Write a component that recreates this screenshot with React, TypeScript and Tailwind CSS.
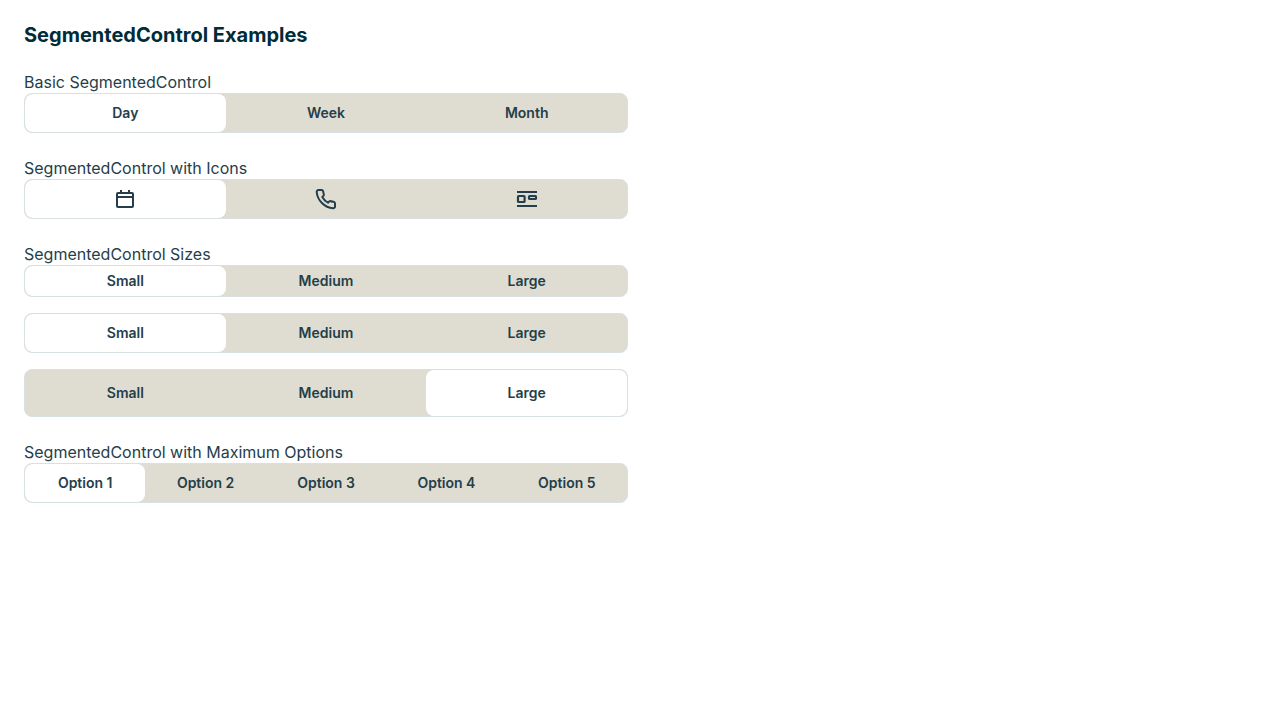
import { useId, useState } from "react";
import type { ReactNode } from "react";
import clsx from "clsx";

type Size = "small" | "medium" | "large";
type Option = { label: string; icon?: ReactNode };

const heights: Record<Size, string> = {
  small: "h-8",
  medium: "h-10",
  large: "h-12",
};

function CalendarIcon() {
  return (
    <svg className="size-6" viewBox="0 0 24 24" fill="none" stroke="currentColor" strokeWidth="2" aria-hidden="true">
      <rect x="4" y="6" width="16" height="14" rx="1" />
      <path d="M4 10h16M8 3v3M16 3v3" />
    </svg>
  );
}

function PhoneIcon() {
  return (
    <svg className="size-6" viewBox="0 0 24 24" fill="none" stroke="currentColor" strokeWidth="2" strokeLinejoin="round" aria-hidden="true">
      <path d="M21 16.9v2.6a1.8 1.8 0 0 1-2 1.8C10.7 20.7 3.3 13.3 2.7 5a1.8 1.8 0 0 1 1.8-2h2.9a1.8 1.8 0 0 1 1.8 1.5c.1.9.3 1.7.6 2.500a1.8 1.8 0 0 1-.4 1.900l-1.100 1.100a14 14 0 0 0 5.700 5.700l1.100-1.100a1.800 1.800 0 0 1 1.900-.4c.8.3 1.600.5 2.500.6A1.800 1.800 0 0 1 21 16.900z" />
    </svg>
  );
}

function LayoutIcon() {
  return (
    <svg className="size-6" viewBox="0 0 24 24" fill="none" stroke="currentColor" strokeWidth="2" aria-hidden="true">
      <path d="M2 5h20M2 19h20" />
      <rect x="3" y="9" width="6.600" height="6" rx="0.800" strokeWidth="2.200" />
      <rect x="14" y="9" width="7" height="3" rx="0.800" strokeWidth="2.200" />
    </svg>
  );
}

function SegmentedControl({
  options,
  size = "medium",
  initial = 0,
  labelledBy,
}: {
  options: Option[];
  size?: Size;
  initial?: number;
  labelledBy: string;
}) {
  const [selected, setSelected] = useState(initial);
  return (
    <div
      role="group"
      aria-labelledby={labelledBy}
      className={clsx("flex overflow-hidden rounded-lg border border-[#d9e0e3] bg-[#dfddd1]", heights[size])}
    >
      {options.map((option, index) => (
        <button
          key={option.label}
          type="button"
          aria-pressed={index === selected}
          aria-label={option.icon ? option.label : undefined}
          onClick={() => setSelected(index)}
          className={clsx(
            "flex min-w-0 flex-1 cursor-pointer items-center justify-center rounded-lg text-sm font-semibold",
            index === selected && "bg-white",
          )}
        >
          {option.icon ?? option.label}
        </button>
      ))}
    </div>
  );
}

function Section({ title, children }: { title: string; children: (id: string) => ReactNode }) {
  const id = useId();
  return (
    <section>
      <h2 id={id} className="text-base leading-[22px]">{title}</h2>
      <div className="flex flex-col gap-4">{children(id)}</div>
    </section>
  );
}

const periods: Option[] = [{ label: "Day" }, { label: "Week" }, { label: "Month" }];
const icons: Option[] = [
  { label: "Calendar", icon: <CalendarIcon /> },
  { label: "Phone", icon: <PhoneIcon /> },
  { label: "Layout", icon: <LayoutIcon /> },
];
const sizes: Option[] = [{ label: "Small" }, { label: "Medium" }, { label: "Large" }];
const maximum: Option[] = [1, 2, 3, 4, 5].map((n) => ({ label: `Option ${n}` }));

export default function App() {
  return (
    <main className="grid grid-cols-2 gap-6 bg-white p-6 font-['Inter',sans-serif] text-[#253e4a]">
      <div className="flex flex-col gap-6">
        <h1 className="text-xl leading-[23px] font-bold text-[#002b38]">SegmentedControl Examples</h1>
        <Section title="Basic SegmentedControl">
          {(id) => <SegmentedControl labelledBy={id} options={periods} />}
        </Section>
        <Section title="SegmentedControl with Icons">
          {(id) => <SegmentedControl labelledBy={id} options={icons} />}
        </Section>
        <Section title="SegmentedControl Sizes">
          {(id) => (
            <>
              <SegmentedControl labelledBy={id} options={sizes} size="small" />
              <SegmentedControl labelledBy={id} options={sizes} />
              <SegmentedControl labelledBy={id} options={sizes} size="large" initial={2} />
            </>
          )}
        </Section>
        <Section title="SegmentedControl with Maximum Options">
          {(id) => <SegmentedControl labelledBy={id} options={maximum} />}
        </Section>
      </div>
    </main>
  );
}
